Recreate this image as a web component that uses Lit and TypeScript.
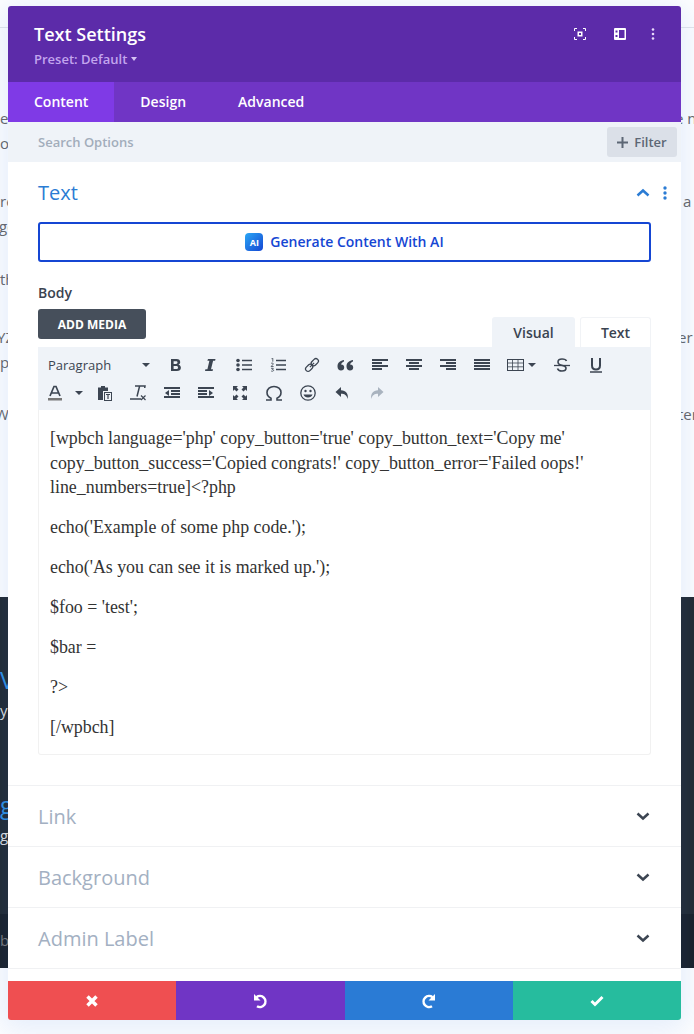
import { LitElement, html, css, svg } from "lit";
import { customElement } from "lit/decorators.js";

const ic = (w: number, h: number, body: unknown, cls = "") =>
  html`<svg class=${cls} width=${w} height=${h} viewBox="0 0 ${w} ${h}" fill="none" aria-hidden="true">${body}</svg>`;

const bars = (rows: [number, number][]) =>
  rows.map(([x, w], i) => svg`<rect x=${x} y=${1 + i * 3} width=${w} height="2" fill="currentColor"/>`);

const tools1 = [
  ic(14, 14, svg`<path d="M2 1h5.500c2.400 0 3.700 1.200 3.700 3.100 0 1.300-.7 2.200-1.800 2.600 1.500.3 2.500 1.400 2.500 3 0 2.200-1.600 3.300-4 3.300H2zM4.600 3.200v2.800h2.400c1 0 1.500-.5 1.500-1.400 0-.9-.5-1.400-1.500-1.400zM4.600 8v3h2.700c1.100 0 1.700-.5 1.700-1.500S8.400 8 7.300 8z" fill="currentColor" fill-rule="evenodd"/>`),
  ic(14, 14, svg`<path d="M5 1h7.500l-.4 1.700h-2L8 11.300h2l-.4 1.700H2l.4-1.700h2l2-8.600h-2z" fill="currentColor"/>`),
  ic(16, 14, svg`<circle cx="2" cy="2.500" r="1.800" fill="currentColor"/><circle cx="2" cy="7" r="1.800" fill="currentColor"/><circle cx="2" cy="11.500" r="1.800" fill="currentColor"/><path d="M6 2.500h10M6 7h10M6 11.500h10" stroke="currentColor" stroke-width="1.500"/>`),
  ic(16, 14, svg`<path d="M6 2.500h10M6 7h10M6 11.500h10" stroke="currentColor" stroke-width="1.500"/><path d="M1.500 .7 2.800 .2v3.500M1 5.500c.5-.6 2.400-.6 2.400.5 0 .8-2.200 1.500-2.300 2.500h2.500M1 10.300h2.300l-1 1.200c1 0 1.400.4 1.300 1-.1.800-1.700 1-2.500.4" stroke="currentColor" stroke-width=".8"/>`),
  ic(16, 16, svg`<g stroke="currentColor" stroke-width="1.300" transform="rotate(-45 8 8)"><rect x="0" y="5.500" width="8" height="5" rx="2.500"/><rect x="8" y="5.500" width="8" height="5" rx="2.500"/><path d="M5 8h6"/></g>`),
  ic(17, 12, svg`<path d="M7 1C3.500 1.500 .5 3.500.5 7.500.5 10 2 11.500 4 11.500s3.200-1.300 3.200-3S6 5.500 4 5.600C4.500 4 5.500 3 7 2.500zM16 1c-3.500.5-6.500 2.500-6.500 6.500 0 2.500 1.500 4 3.500 4s3.200-1.300 3.200-3-1.200-3-3.200-2.900c.5-1.600 1.500-2.600 3-3.100z" fill="currentColor"/>`),
  ic(16, 14, bars([[0, 16], [0, 10], [0, 16], [0, 10]])),
  ic(16, 14, bars([[0, 16], [3, 10], [0, 16], [3, 10]])),
  ic(16, 14, bars([[0, 16], [6, 10], [0, 16], [6, 10]])),
  ic(16, 14, bars([[0, 16], [0, 16], [0, 16], [0, 16]])),
];

const editorParas = [
  html`[wpbch language='php' copy_button='true' copy_button_text='Copy me' copy_button_success='Copied congrats!' copy_button_error='Failed oops!' line_numbers=true]&lt;?php`,
  "echo('Example of some php code.');",
  "echo('As you can see it is marked up.');",
  "$foo = 'test';",
  "$bar =",
  "?>",
  "[/wpbch]",
];

const bgRows: [number, string, number, string, number][] = [
  [118, "ex", 0, "e n", -6],
  [143, "oc", 0, "", 0],
  [201, "re", 0, "a", 2],
  [226, "ge", -1, "", 0],
  [279, "th", 0, "", 0],
  [337, "YZ", -3, "er", -3],
  [362, "p", 0, "", 0],
  [414, "W", -5, "ter", -3],
];

@customElement("app-root")
export class AppRoot extends LitElement {
  static styles = css`
    :host { display: block; position: relative; width: 694px; height: 1034px; overflow: hidden; background: #fff; font-family: "Open Sans", sans-serif; }
    .backdrop { position: absolute; inset: 0; }
    .rule { position: absolute; top: 27px; left: 0; right: 0; height: 1px; background: #e4e6ea; }
    .frag { position: absolute; left: 0; right: 0; display: flex; justify-content: space-between; font-size: 15px; line-height: 20px; color: #666; }
    .left-w { width: 8px; overflow: hidden; white-space: nowrap; }
    .right-w { width: 13px; overflow: hidden; white-space: nowrap; }
    .dark { position: absolute; left: 0; right: 0; top: 597px; height: 371px; background: #21282f; color: #fff; font-size: 15px; }
    .foot { position: absolute; left: 0; right: 0; top: 317px; bottom: 0; background: #181e25; }
    .dt { position: absolute; left: 0; width: 8px; overflow: hidden; white-space: nowrap; }
    .dt.blue { color: #2e8fe0; font-size: 24px; line-height: 30px; font-weight: 500; }
    .dt.small { line-height: 20px; color: #ddd; }
    .dt.muted { color: #777; }

    .modal { position: absolute; left: 8px; top: 6px; width: 673px; height: 1014px; display: flex; flex-direction: column; background: #fff; border-radius: 3px; box-shadow: 0 5px 30px 8px rgba(60, 120, 225, .13); }
    .head { height: 76px; box-sizing: border-box; background: #5c2ba9; border-radius: 3px 3px 0 0; padding: 16px 26px 0; display: flex; justify-content: space-between; color: #fff; }
    .title { font-size: 18px; line-height: 24px; font-weight: 600; }
    .preset { font-size: 13px; line-height: 18px; font-weight: 600; color: #c3a5ee; margin-top: 4px; display: flex; align-items: center; gap: 4px; }
    .caret { width: 0; height: 0; border: 3px solid transparent; border-top: 4px solid #d5c2f3; border-bottom: 0; }
    .hicons { display: flex; padding-top: 6px; align-items: flex-start; height: 16px; }
    .hicons svg { display: block; }
    .hi1 { margin-right: 28px; }
    .hi2 { margin-right: 25px; }
    .tabs { height: 40px; background: #7035c5; display: flex; color: #fff; font-size: 14px; font-weight: 600; }
    .tab { padding: 0 26px 2px; display: flex; align-items: center; }
    .tab.on { background: #7f3ae6; }
    .search { height: 40px; background: #eff3f8; display: flex; justify-content: space-between; align-items: center; padding: 0 4px 0 30px; font-size: 13px; font-weight: 600; color: #a2adbb; }
    .filter { height: 30px; width: 70px; background: #dbe0e8; border-radius: 3px; display: flex; align-items: center; justify-content: center; gap: 6px; color: #5d6775; font-size: 13px; font-weight: 600; }
    .body { flex: 1; display: flex; flex-direction: column; min-height: 0; }
    .open { padding: 0 30px; height: 623px; box-sizing: border-box; }
    .sechead { height: 60px; display: flex; align-items: center; justify-content: space-between; }
    .sectitle { font-size: 20px; line-height: 28px; color: #2b7cd4; margin-top: 2px; }
    .secicons { display: flex; align-items: center; gap: 13px; margin-right: -16px; margin-top: 1px; }
    .ai { height: 40px; box-sizing: border-box; border: 2px solid #1546d3; border-radius: 3px; display: flex; align-items: center; justify-content: center; gap: 7px; padding: 0 0 2px 0; color: #1546d3; font-size: 14px; font-weight: 600; }
    .aibadge { width: 18px; height: 18px; margin-top: 2px; border-radius: 4px; background: linear-gradient(135deg, #2aa7f5, #1546d3); color: #fff; font-size: 9px; font-weight: 700; display: flex; align-items: center; justify-content: center; }
    .label { font-size: 14px; line-height: 20px; font-weight: 600; color: #3a4350; margin-top: 21px; }
    .mediarow { display: flex; justify-content: space-between; align-items: flex-end; margin-top: 6px; height: 38px; }
    .media { width: 108px; height: 30px; align-self: flex-start; background: #464f5b; color: #fff; font-size: 12px; font-weight: 700; border-radius: 3px; display: flex; align-items: center; justify-content: center; }
    .etabs { display: flex; gap: 5px; }
    .etab { height: 30px; box-sizing: border-box; display: flex; align-items: center; justify-content: center; font-size: 14px; font-weight: 600; color: #3a4350; border-radius: 3px 3px 0 0; }
    .etab.v { width: 83px; background: #eff3f8; }
    .etab.t { width: 71px; border: 1px solid #f1f3f6; border-bottom: 0; }
    .toolbar { height: 63px; background: #eff3f8; box-sizing: border-box; padding: 4px 10px 0; color: #3c4552; display: flex; flex-direction: column; }
    .trow { display: flex; align-items: center; height: 28px; }
    .para { width: 110.5px; display: flex; justify-content: space-between; align-items: center; font-size: 13px; font-weight: 500; box-sizing: border-box; padding-right: 9px; }
    .tb { width: 34px; display: flex; align-items: center; justify-content: center; }
    .tb.wide { width: 46px; }
    .tb.acolor { width: 22px; justify-content: flex-start; }
    .tb.acaret { width: 17px; }
    .tcar { width: 0; height: 0; border: 4px solid transparent; border-top: 4px solid #3c4552; border-bottom: 0; }
    .dim { color: #a9b3bf; }
    .editor { height: 345px; box-sizing: border-box; border: 1px solid #f1f1f1; border-top: 0; border-radius: 0 0 3px 3px; padding: 16px 11px 0; font-family: "Liberation Serif", serif; font-size: 17.87px; line-height: 24.5px; color: #333; }
    .editor p { margin: 0 0 15.5px; }
    .closed { height: 61px; box-sizing: border-box; border-top: 1px solid #f0f1f3; display: flex; align-items: center; justify-content: space-between; padding: 0 31px 0 30px; font-size: 20px; color: #a3b0c2; }
    .closed.last { border-bottom: 1px solid #f0f1f3; height: 62px; }
    .spacer { flex: 1; }
    .actions { height: 39px; display: grid; grid-template-columns: repeat(4, 1fr); border-radius: 0 0 3px 3px; overflow: hidden; flex: none; }
    .actions div { display: flex; align-items: center; justify-content: center; }
    .a1 { background: #ef4f51; } .a2 { background: #7035c5; } .a3 { background: #2a7bd5; } .a4 { background: #26bc9e; }
  `;

  render() {
    const chevDown = ic(14, 9, svg`<path d="M1.500 1.500 7 6.500l5.500-5" stroke="#3c4552" stroke-width="2.500"/>`);
    return html`
      <div class="backdrop">
        <div class="rule"></div>
        ${bgRows.map(([y, l, li, r, ri]) => html`<div class="frag" style="top:${y - 10}px"><span class="left-w" style="text-indent:${li}px">${l}</span><span class="right-w" style="text-indent:${ri}px">${r}</span></div>`)}
        <div class="dark">
          <div class="foot"></div>
          <div class="dt blue" style="top:68px">V</div>
          <div class="dt small" style="top:103px">y</div>
          <div class="dt blue" style="top:193px">go</div>
          <div class="dt small" style="top:228px">go</div>
          <div class="dt small muted" style="top:333px">b</div>
        </div>
      </div>
      <div class="modal">
        <div class="head">
          <div>
            <div class="title">Text Settings</div>
            <div class="preset">Preset: Default <span class="caret"></span></div>
          </div>
          <div class="hicons">
            ${ic(12, 12, svg`<path d="M.5 3V.5H3M9 .5h2.500V3M11.500 9v2.500H9M3 11.500H.5V9" stroke="#fff"/><rect x="3.500" y="3.500" width="5" height="5" fill="#fff"/><rect x="5" y="5" width="2" height="2" fill="#5c2ba9"/>`, "hi1")}
            ${ic(12, 12, svg`<rect x="0" y="0" width="12" height="12" rx="1" fill="#fff"/><rect x="5" y="2" width="5.500" height="8" fill="#5c2ba9"/><rect x="1.500" y="2.500" width="2" height="2" fill="#5c2ba9"/><rect x="1.500" y="7" width="2" height="2" fill="#5c2ba9"/>`, "hi2")}
            ${ic(4, 12, svg`<circle cx="2" cy="1.500" r="1.300" fill="#e8d9fb"/><circle cx="2" cy="6" r="1.300" fill="#e8d9fb"/><circle cx="2" cy="10.500" r="1.300" fill="#e8d9fb"/>`)}
          </div>
        </div>
        <div class="tabs">
          <div class="tab on">Content</div>
          <div class="tab">Design</div>
          <div class="tab">Advanced</div>
        </div>
        <div class="search">
          <span>Search Options</span>
          <div class="filter">${ic(11, 11, svg`<path d="M5.500 0v11M0 5.500h11" stroke="#5d6775" stroke-width="2"/>`)}Filter</div>
        </div>
        <div class="body">
          <div class="open">
            <div class="sechead">
              <span class="sectitle">Text</span>
              <div class="secicons">
                ${ic(14, 9, svg`<path d="M1.500 7.500 7 2.500l5.500 5" stroke="#2b7cd4" stroke-width="2.500"/>`)}
                ${ic(4, 14, svg`<circle cx="2" cy="2" r="1.700" fill="#2b7cd4"/><circle cx="2" cy="7" r="1.700" fill="#2b7cd4"/><circle cx="2" cy="12" r="1.700" fill="#2b7cd4"/>`)}
              </div>
            </div>
            <div class="ai"><span class="aibadge">AI</span>Generate Content With AI</div>
            <div class="label">Body</div>
            <div class="mediarow">
              <div class="media">ADD MEDIA</div>
              <div class="etabs"><div class="etab v">Visual</div><div class="etab t">Text</div></div>
            </div>
            <div class="toolbar">
              <div class="trow">
                <div class="para">Paragraph <span class="tcar"></span></div>
                ${tools1.map((t) => html`<div class="tb">${t}</div>`)}
                <div class="tb wide">${ic(29, 14, svg`<rect x=".5" y="1.500" width="16" height="11" stroke="currentColor"/><path d="M.5 5h16M.5 8.800h16M5.500 1.500v11M11 1.500v11" stroke="currentColor" stroke-width=".8"/><path d="M21 5h8l-4 4z" fill="currentColor"/>`)}</div>
                <div class="tb">${ic(16, 16, svg`<path d="M0 8.500h16" stroke="currentColor" stroke-width="1.300"/><path d="M12.500 4C12 2.500 10.500 2 8 2 5.500 2 4 3 4 5c0 2 2 3 4.500 3.500 2.300.5 3.500 1.200 3.500 2.800 0 1.700-1.500 2.700-4 2.700-2.500 0-4-.8-4.500-2.500" stroke="currentColor" stroke-width="1.600"/>`)}</div>
                <div class="tb">${ic(12, 16, svg`<path d="M2 1v7.500c0 2.500 1.500 4 4 4s4-1.500 4-4V1" stroke="currentColor" stroke-width="2"/><path d="M0 15h12" stroke="currentColor" stroke-width="1.500"/>`)}</div>
              </div>
              <div class="trow">
                <div class="tb acolor">${ic(14, 16, svg`<path d="M2 11 6 1.500h2L12 11M3.500 8h7" stroke="currentColor" stroke-width="1.700"/><rect x="0" y="13" width="14" height="2.500" fill="#777"/>`)}</div>
                <div class="tb acaret"><span class="tcar"></span></div>
                <div class="tb">${ic(16, 16, svg`<path d="M2 2.500h3V1h4v1.500h3V6H7v9H2z" fill="currentColor"/><rect x="8" y="7" width="8" height="9" fill="currentColor"/><rect x="9" y="8" width="6" height="7" fill="#eff3f8"/><path d="M10 9.500h4M12 9.500V14" stroke="currentColor" stroke-width="1.200"/>`)}</div>
                <div class="tb">${ic(16, 16, svg`<path d="M5 1h10l-.3 2M9.500 1.500 7 11.500M0 14h11" stroke="currentColor" stroke-width="1.500"/><path d="M11 10.500l4.500 4.500M15.500 10.500 11 15" stroke="currentColor" stroke-width="1.200"/>`)}</div>
                <div class="tb">${ic(16, 14, svg`${bars([[0, 16], [7, 9], [7, 9], [0, 16]])}<path d="M5 4 1 7l4 3z" fill="currentColor"/>`)}</div>
                <div class="tb">${ic(16, 14, svg`${bars([[0, 16], [0, 9], [0, 9], [0, 16]])}<path d="M11 4l4 3-4 3z" fill="currentColor"/>`)}</div>
                <div class="tb">${ic(16, 16, svg`<path d="M1 1h5L4.500 2.500 6.500 4.500 4.500 6.500 2.500 4.500 1 6zM15 1v5L13.500 4.500 11.500 6.500 9.500 4.500 11.500 2.500 10 1zM1 15v-5l1.500 1.500 2-2 2 2-2 2L6 15zM15 15h-5l1.500-1.500-2-2 2-2 2 2L15 10z" fill="currentColor"/>`)}</div>
                <div class="tb">${ic(18, 16, svg`<path d="M1 15h5v-1.800C3.500 12 2 10 2 7.500 2 4 5 1.500 9 1.500S16 4 16 7.500c0 2.500-1.500 4.500-4 5.700V15h5" stroke="currentColor" stroke-width="1.600"/>`)}</div>
                <div class="tb">${ic(16, 16, svg`<circle cx="8" cy="8" r="7.200" stroke="currentColor" stroke-width="1.300"/><circle cx="5.500" cy="6" r="1.200" fill="currentColor"/><circle cx="10.500" cy="6" r="1.200" fill="currentColor"/><path d="M3.500 9.500c1 4 8 4 9 0z" fill="currentColor"/>`)}</div>
                <div class="tb">${ic(15, 14, svg`<path d="M6 1 .5 6 6 11V7.800c3.500 0 5.500 1.300 6.800 5.200.8-5-1.800-8.500-6.800-8.700z" fill="currentColor"/>`)}</div>
                <div class="tb dim">${ic(15, 14, svg`<path d="M9 1l5.500 5L9 11V7.800C5.500 7.800 3.500 9.100 2.200 13 1.400 8 4 4.500 9 4.300z" fill="currentColor"/>`)}</div>
              </div>
            </div>
            <div class="editor">${editorParas.map((p) => html`<p>${p}</p>`)}</div>
          </div>
          <div class="closed"><span>Link</span>${chevDown}</div>
          <div class="closed"><span>Background</span>${chevDown}</div>
          <div class="closed last"><span>Admin Label</span>${chevDown}</div>
          <div class="spacer"></div>
        </div>
        <div class="actions">
          <div class="a1">${ic(14, 14, svg`<path d="M2.500 2.500l9 9M11.500 2.500l-9 9" stroke="#fff" stroke-width="3.500"/>`)}</div>
          <div class="a2">${ic(16, 18, svg`<path d="M4.500 5.200A5.500 5.500 0 1 1 5 14.200" stroke="#fff" stroke-width="2.500"/><path d="M2 2v6.500h6.500z" fill="#fff"/>`)}</div>
          <div class="a3">${ic(16, 18, svg`<path d="M11.500 5.200A5.500 5.500 0 1 0 11 14.200" stroke="#fff" stroke-width="2.500"/><path d="M14 2v6.500H7.500z" fill="#fff"/>`)}</div>
          <div class="a4">${ic(14, 12, svg`<path d="M1.500 6 5 9.500 12.500 2" stroke="#fff" stroke-width="3"/>`)}</div>
        </div>
      </div>
    `;
  }
}
